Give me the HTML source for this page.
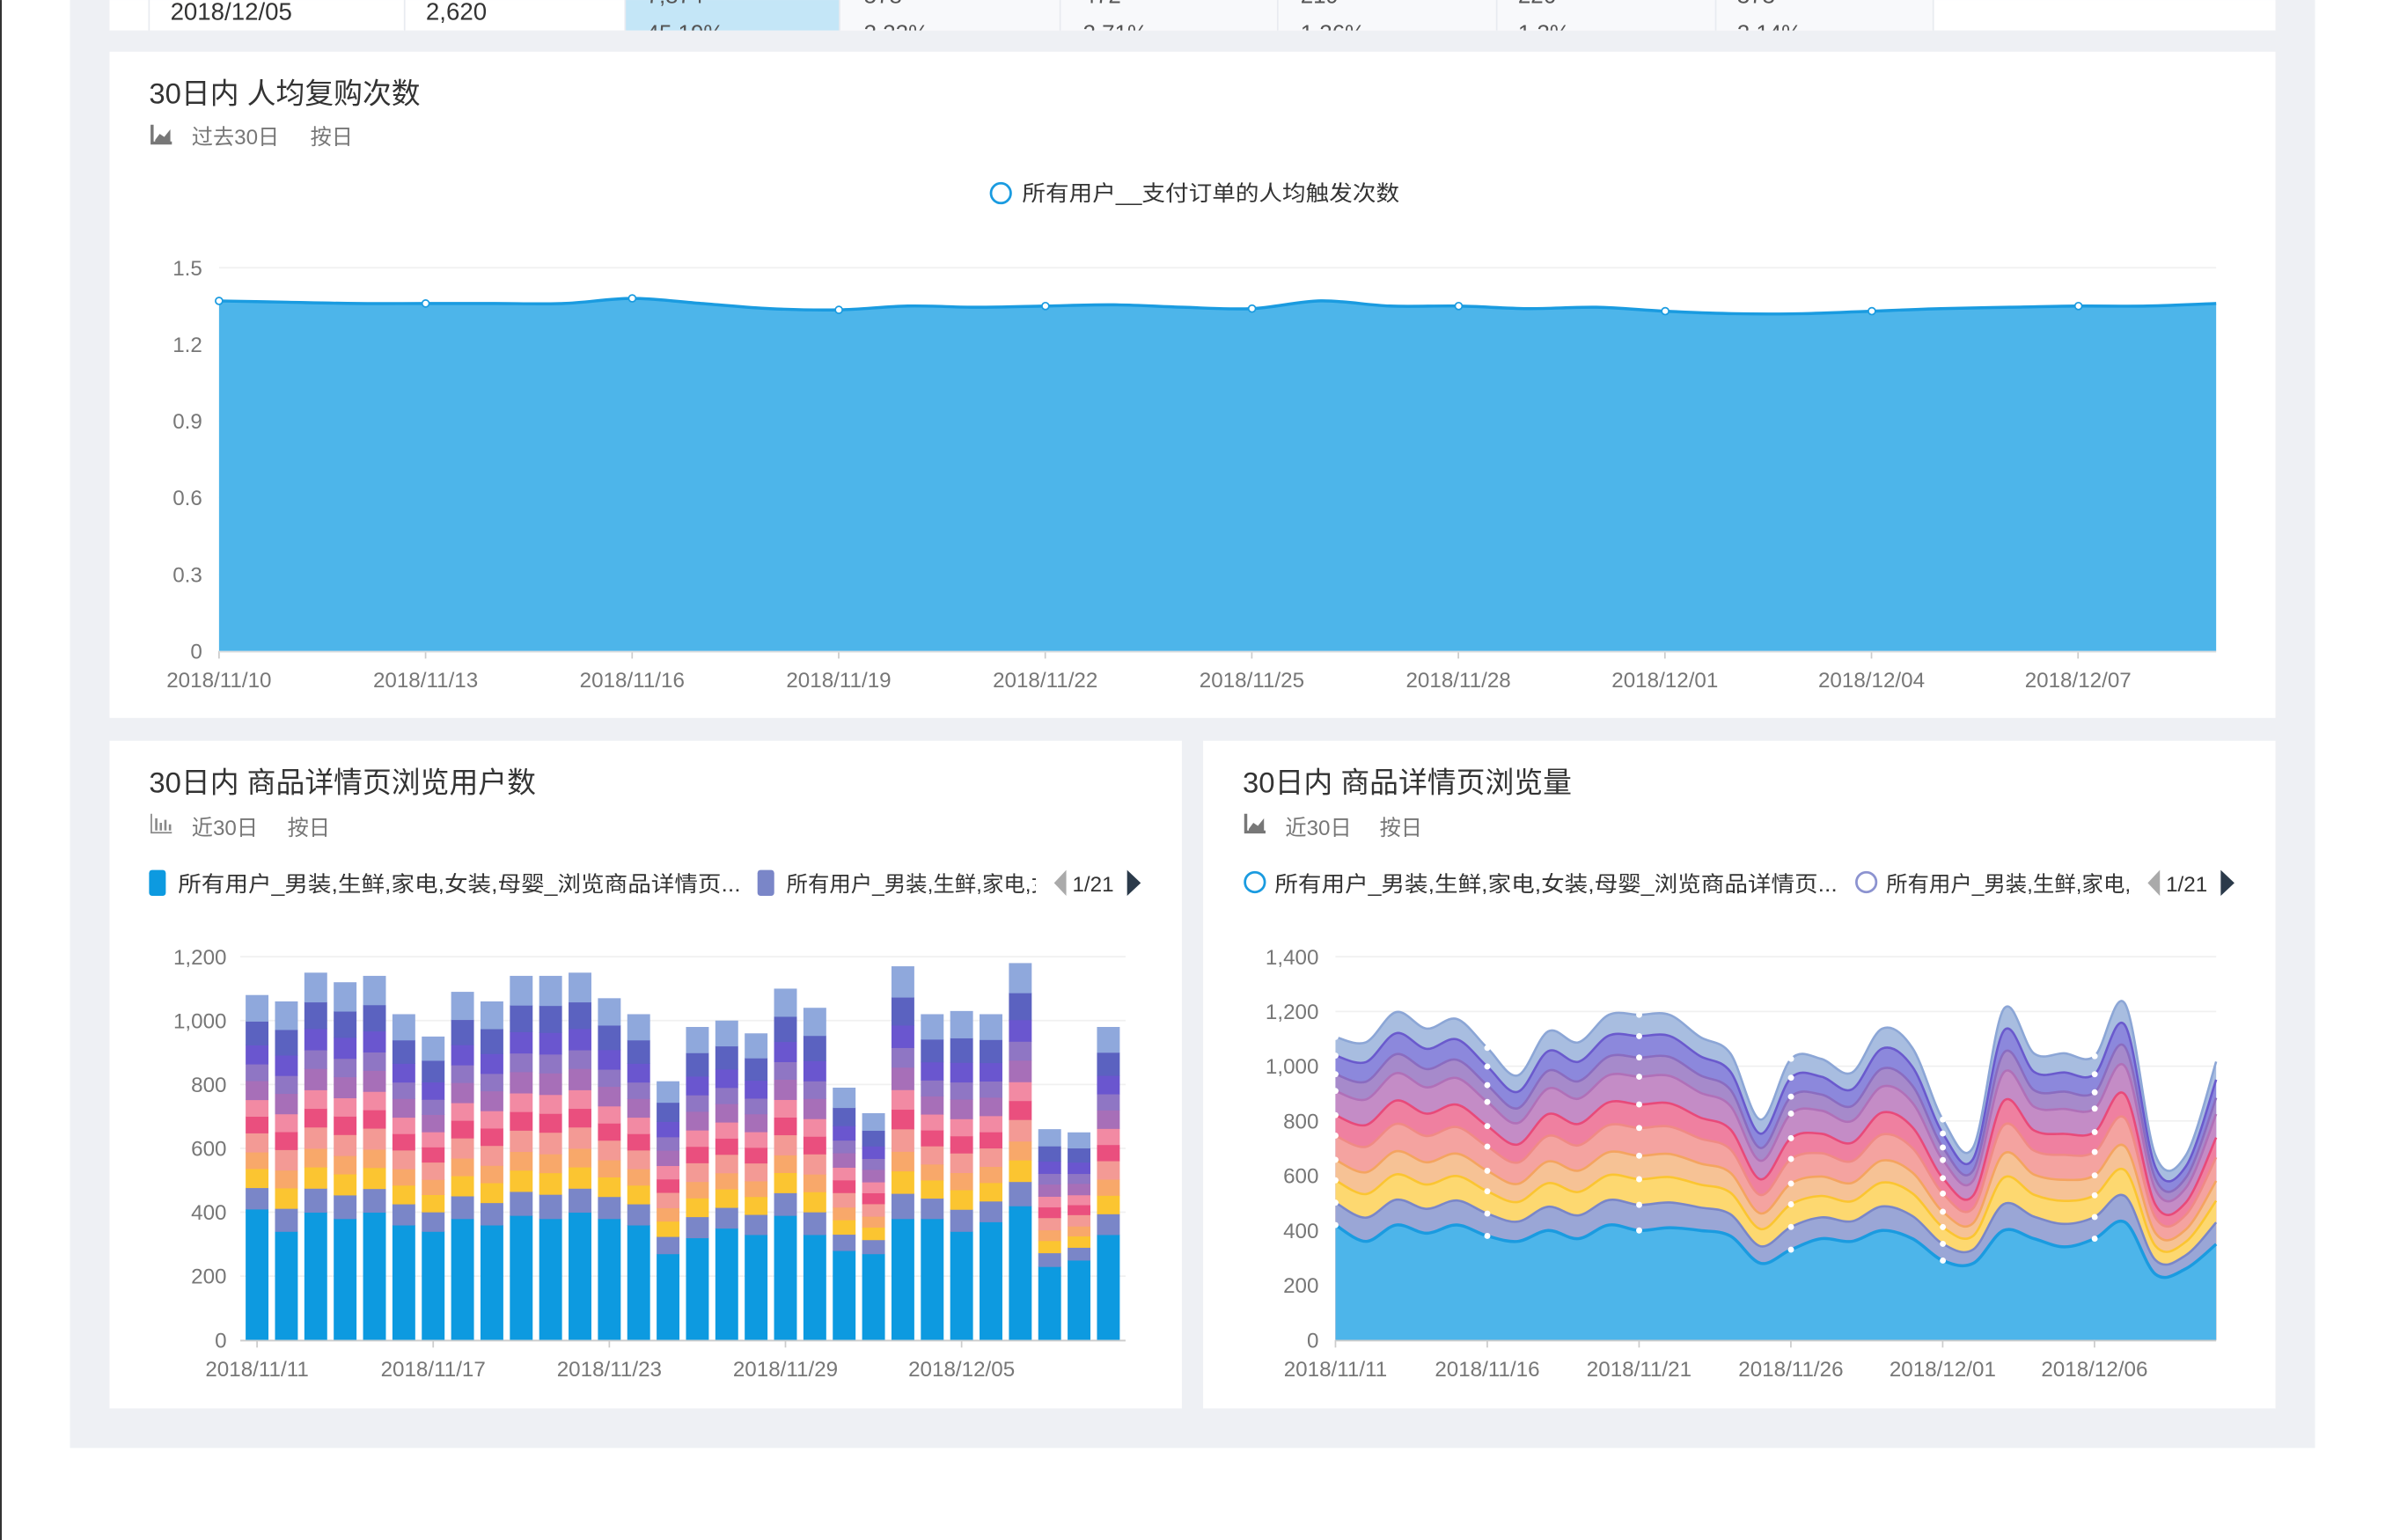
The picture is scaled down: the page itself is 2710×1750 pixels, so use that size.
<!DOCTYPE html>
<html><head><meta charset="utf-8"><style>
html,body{margin:0;padding:0;background:#fff;width:2710px;height:1750px;overflow:hidden}
svg{display:block}
text{font-family:"Liberation Sans","Noto Sans CJK SC",sans-serif}
</style></head><body>
<svg id="s" width="2710" height="1750" viewBox="0 0 1568 1012.5" xmlns="http://www.w3.org/2000/svg">
<defs><clipPath id="tc"><rect x="72" y="0" width="1424" height="20"/></clipPath>
<clipPath id="lc2"><rect x="500" y="560" width="181" height="40"/></clipPath>
<clipPath id="lc3"><rect x="1220" y="560" width="180" height="40"/></clipPath></defs>
<rect x="0" y="0" width="1568" height="1013" fill="#fff"/>
<rect x="0" y="0" width="1.2" height="1013" fill="#333"/>
<rect x="46" y="0" width="1476" height="952" fill="#eef0f4"/>
<!-- top table -->
<rect x="72" y="0" width="1424" height="20" fill="#fff"/>
<rect x="411" y="0" width="141" height="20" fill="#c4e6f7"/>
<g fill="#f8f9fb"><rect x="552" y="0" width="719" height="20"/></g>
<g stroke="#e8ebf0" stroke-width="1"><line x1="98" y1="0" x2="98" y2="20"/><line x1="266" y1="0" x2="266" y2="20"/><line x1="411" y1="0" x2="411" y2="20"/><line x1="552" y1="0" x2="552" y2="20"/><line x1="697" y1="0" x2="697" y2="20"/><line x1="840" y1="0" x2="840" y2="20"/><line x1="984" y1="0" x2="984" y2="20"/><line x1="1128" y1="0" x2="1128" y2="20"/><line x1="1271" y1="0" x2="1271" y2="20"/></g>
<text x="112" y="13" font-size="16" fill="#333">2018/12/05</text>
<text x="280" y="13" font-size="16" fill="#333">2,620</text>
<g font-size="15" fill="#555" clip-path="url(#tc)"><text x="425" y="27">45.19%</text><text x="568" y="27">3.32%</text><text x="712" y="27">2.71%</text><text x="855" y="27">1.26%</text><text x="998" y="27">1.3%</text><text x="1142" y="27">2.14%</text>
<text x="425" y="2">7,874</text><text x="568" y="2">578</text><text x="712" y="2">472</text><text x="855" y="2">219</text><text x="998" y="2">226</text><text x="1142" y="2">373</text></g>
<!-- card 1 -->
<rect x="72" y="34" width="1424" height="438" fill="#fff"/>
<text x="98" y="68" font-size="19" fill="#333">30日内 人均复购次数</text>
<path d="M99 82v13h14v-2h-12v-11z M102 92l3-4 3 2 4-5v8h-10z" fill="#777"/>
<text x="126" y="95" font-size="14" fill="#777">过去30日</text><text x="204" y="95" font-size="14" fill="#777">按日</text>
<circle cx="658" cy="127" r="6.5" fill="none" stroke="#1a9be0" stroke-width="1.6"/>
<text x="672" y="132" font-size="14" fill="#333" textLength="248" lengthAdjust="spacingAndGlyphs">所有用户__支付订单的人均触发次数</text>
<g id="c1"></g>
<!-- card 2 -->
<rect x="72" y="487" width="705" height="439" fill="#fff"/>
<text x="98" y="521" font-size="19" fill="#333">30日内 商品详情页浏览用户数</text>
<path d="M99 535v13h14v-1h-13v-12z M102 538h1.5v8h-1.5z M105 541h1.5v5h-1.5z M108 539h1.5v7h-1.5z M111 542h1.5v4h-1.5z" fill="#888"/>
<text x="126" y="549" font-size="14" fill="#777">近30日</text><text x="189" y="549" font-size="14" fill="#777">按日</text>
<rect x="98" y="572" width="11" height="17" rx="2" fill="#0d9ae0"/>
<text x="117" y="586" font-size="14" fill="#333" textLength="370" lengthAdjust="spacingAndGlyphs">所有用户_男装,生鲜,家电,女装,母婴_浏览商品详情页...</text>
<rect x="498" y="572" width="11" height="17" rx="2" fill="#7a86c8"/>
<g clip-path="url(#lc2)"><text x="517" y="586" font-size="14" fill="#333" textLength="175" lengthAdjust="spacingAndGlyphs">所有用户_男装,生鲜,家电,女</text></g>
<path d="M701 572l-8 8.5 8 8.5z" fill="#aaa"/><text x="705" y="586" font-size="14" fill="#333">1/21</text><path d="M741 572l9 8.5-9 8.5z" fill="#2b3a4a"/>
<g id="c2"></g>
<!-- card 3 -->
<rect x="791" y="487" width="705" height="439" fill="#fff"/>
<text x="817" y="521" font-size="19" fill="#333">30日内 商品详情页浏览量</text>
<path d="M818 535v13h14v-2h-12v-11z M821 545l3-4 3 2 4-5v8h-10z" fill="#777"/>
<text x="845" y="549" font-size="14" fill="#777">近30日</text><text x="907" y="549" font-size="14" fill="#777">按日</text>
<circle cx="825" cy="580" r="6.5" fill="none" stroke="#1a9be0" stroke-width="1.6"/>
<text x="838" y="586" font-size="14" fill="#333" textLength="370" lengthAdjust="spacingAndGlyphs">所有用户_男装,生鲜,家电,女装,母婴_浏览商品详情页...</text>
<circle cx="1227" cy="580" r="6.5" fill="none" stroke="#8c93d0" stroke-width="1.6"/>
<g clip-path="url(#lc3)"><text x="1240" y="586" font-size="14" fill="#333" textLength="175" lengthAdjust="spacingAndGlyphs">所有用户_男装,生鲜,家电,女</text></g>
<path d="M1420 572l-8 8.5 8 8.5z" fill="#aaa"/><text x="1424" y="586" font-size="14" fill="#333">1/21</text><path d="M1460 572l9 8.5-9 8.5z" fill="#2b3a4a"/>
<g id="c3"></g>
</svg>
<script>
var NS="http://www.w3.org/2000/svg";
function el(p,t,a,txt){var e=document.createElementNS(NS,t);for(var k in a)e.setAttribute(k,a[k]);if(txt!=null)e.textContent=txt;p.appendChild(e);return e;}
function smooth(pts){var d="M"+pts[0][0]+" "+pts[0][1];for(var i=0;i<pts.length-1;i++){var p0=pts[i-1]||pts[i],p1=pts[i],p2=pts[i+1],p3=pts[i+2]||p2;var c1x=p1[0]+(p2[0]-p0[0])/6,c1y=p1[1]+(p2[1]-p0[1])/6,c2x=p2[0]-(p3[0]-p1[0])/6,c2y=p2[1]-(p3[1]-p1[1])/6;d+="C"+c1x.toFixed(1)+" "+c1y.toFixed(1)+" "+c2x.toFixed(1)+" "+c2y.toFixed(1)+" "+p2[0].toFixed(1)+" "+p2[1].toFixed(1);}return d;}
var g=document.getElementById("c1");
var yl=["1.5","1.2","0.9","0.6","0.3","0"];
for(var i=0;i<6;i++){var y=176+i*50.4;el(g,"line",{x1:144,x2:1457,y1:y,y2:y,stroke:"#f0f0f0"});el(g,"text",{x:133,y:y+5,"font-size":14,fill:"#777","text-anchor":"end"},yl[i]);}
var v=[1.37,1.365,1.36,1.36,1.36,1.36,1.38,1.36,1.34,1.335,1.35,1.345,1.35,1.355,1.345,1.34,1.37,1.35,1.35,1.34,1.345,1.33,1.32,1.32,1.33,1.34,1.345,1.35,1.35,1.36];
var n=30,pts=[];for(i=0;i<n;i++){var x=144+i*(1313/29);pts.push([x,428-v[i]/1.5*252]);}
var d=smooth(pts);
el(g,"path",{d:d+"L1457 428L144 428Z",fill:"#4db5ea"});
el(g,"path",{d:d,fill:"none",stroke:"#1a9be0","stroke-width":2});
for(i=0;i<n;i+=3){el(g,"circle",{cx:pts[i][0],cy:pts[i][1],r:2.3,fill:"#fff",stroke:"#1a9be0","stroke-width":1});}
var xl=["2018/11/10","2018/11/13","2018/11/16","2018/11/19","2018/11/22","2018/11/25","2018/11/28","2018/12/01","2018/12/04","2018/12/07"];
for(i=0;i<10;i++){var x=144+i*135.8;el(g,"line",{x1:x,x2:x,y1:428,y2:433,stroke:"#ccc"});el(g,"text",{x:x,y:452,"font-size":14,fill:"#777","text-anchor":"middle"},xl[i]);}
el(g,"line",{x1:144,x2:1457,y1:428.5,y2:428.5,stroke:"#ddd"});
g=document.getElementById("c2");
var y0=881,sc=252/1200;
var yl2=["1,200","1,000","800","600","400","200","0"];
for(i=0;i<7;i++){var y=629+i*42;el(g,"line",{x1:158,x2:740,y1:y,y2:y,stroke:"#f0f0f0"});el(g,"text",{x:149,y:y+5,"font-size":14,fill:"#777","text-anchor":"end"},yl2[i]);}
var tot=[1080,1060,1150,1120,1140,1020,950,1090,1060,1140,1140,1150,1070,1020,810,980,1000,960,1100,1040,790,710,1170,1020,1030,1020,1180,660,650,980];
var blue=[410,340,400,380,400,360,340,380,360,390,380,400,380,360,270,320,350,330,390,330,280,270,380,380,340,370,420,230,250,330];
var cols=["#7a86c8","#fbc531","#f8a86a","#f39a95","#ea4f7e","#f28aa3","#a76fb8","#8f76c4","#6a56cf","#5b62c0","#8fa8dc"];
var fr=[.09,.08,.07,.08,.07,.07,.08,.07,.08,.1,.11];
for(i=0;i<30;i++){var cx=169+i*19.3,x=cx-7.5;var yb=y0;var h=blue[i]*sc;el(g,"rect",{x:x,y:yb-h,width:15,height:h,fill:"#0d9ae0"});yb-=h;var rest=tot[i]-blue[i];var s=0;for(var j=0;j<fr.length;j++)s+=fr[j];for(j=0;j<cols.length;j++){var hh=rest*fr[j]/s*sc;el(g,"rect",{x:x,y:yb-hh,width:15,height:hh+0.3,fill:cols[j]});yb-=hh;}}
el(g,"line",{x1:158,x2:740,y1:881.5,y2:881.5,stroke:"#ccc"});
var xl2=["2018/11/11","2018/11/17","2018/11/23","2018/11/29","2018/12/05"];
for(i=0;i<5;i++){var x=169+i*115.8;el(g,"line",{x1:x,x2:x,y1:881,y2:886,stroke:"#ccc"});el(g,"text",{x:x,y:905,"font-size":14,fill:"#777","text-anchor":"middle"},xl2[i]);}
g=document.getElementById("c3");
var sc3=252/1400;
var yl3=["1,400","1,200","1,000","800","600","400","200","0"];
for(i=0;i<8;i++){var y=629+i*36;el(g,"line",{x1:878,x2:1457,y1:y,y2:y,stroke:"#f0f0f0"});el(g,"text",{x:867,y:y+5,"font-size":14,fill:"#777","text-anchor":"end"},yl3[i]);}
var T=[1100,1080,1190,1130,1165,1060,960,1120,1080,1180,1180,1180,1100,1040,800,1020,1020,970,1130,1060,800,700,1200,1040,1040,1030,1220,670,670,1010];
var B=[420,360,420,390,420,380,360,400,370,420,400,410,400,380,280,330,370,360,400,370,290,280,400,370,340,370,430,240,260,350];
var scol=[["#9aa6d6","#7a86c8"],["#fdd870","#fbc531"],["#f6c295","#f4a460"],["#f4a3a0","#f08a85"],["#ef80a0","#e84a7a"],["#c48cc6","#b070b8"],["#a68acb","#8a6cc0"],["#8c88dc","#6a5acd"],["#a8bde0","#8ca6d6"]];
var sf=[.12,.12,.11,.13,.11,.13,.09,.1,.1];
var xs=[];for(i=0;i<30;i++)xs.push(878+i*(579/29));
var base=xs.map(function(x,i){return [x,y0-B[i]*sc3];});
var layers=[base];var cum=B.slice();
for(j=0;j<scol.length;j++){cum=cum.map(function(c,i){return c+(T[i]-B[i])*sf[j];});layers.push(xs.map(function(x,i){return [x,y0-cum[i]*sc3];}));}
for(j=layers.length-1;j>=1;j--){el(g,"path",{d:smooth(layers[j])+"L1457 881L878 881Z",fill:scol[j-1][0]});}
el(g,"path",{d:smooth(base)+"L1457 881L878 881Z",fill:"#4db5ea"});
for(j=layers.length-1;j>=1;j--){el(g,"path",{d:smooth(layers[j]),fill:"none",stroke:scol[j-1][1],"stroke-width":1.5});}
el(g,"path",{d:smooth(base),fill:"none",stroke:"#1a9be0","stroke-width":2});
for(i=0;i<30;i+=5){for(j=0;j<layers.length;j++){el(g,"circle",{cx:layers[j][i][0],cy:layers[j][i][1],r:2,fill:"#fff"});}}
el(g,"line",{x1:878,x2:1457,y1:881.5,y2:881.5,stroke:"#ccc"});
var xl3=["2018/11/11","2018/11/16","2018/11/21","2018/11/26","2018/12/01","2018/12/06"];
for(i=0;i<6;i++){var x=878+i*99.8;el(g,"line",{x1:x,x2:x,y1:881,y2:886,stroke:"#ccc"});el(g,"text",{x:x,y:905,"font-size":14,fill:"#777","text-anchor":"middle"},xl3[i]);}
</script>
</body></html>
